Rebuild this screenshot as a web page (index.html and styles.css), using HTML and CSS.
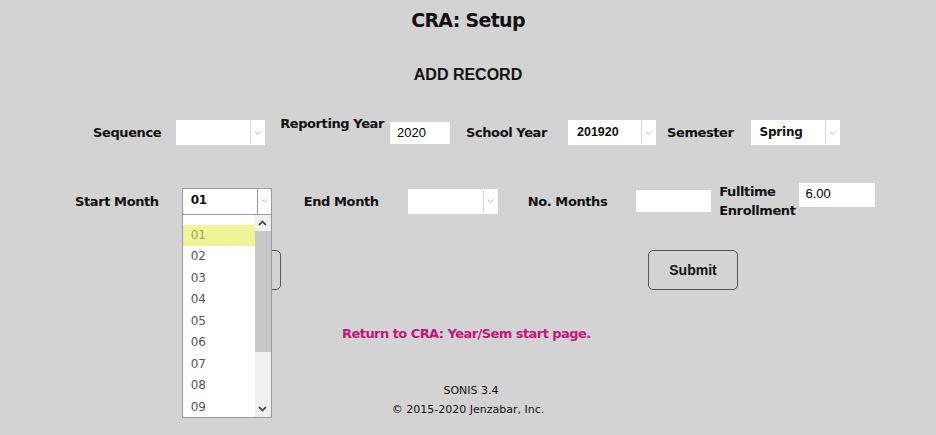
FILE: index.html
```html
<!DOCTYPE html>
<html>
<head>
<meta charset="utf-8">
<link rel="stylesheet" href="styles.css">
</head>
<body>
<div class="page">
  <h1 class="title">CRA: Setup</h1>
  <h2 class="subtitle">ADD RECORD</h2>

  <div class="row row1">
    <span class="lbl lbl-seq">Sequence</span>
    <div class="sel sel-seq"><span class="val"></span><span class="arr"><svg width="7" height="4" viewBox="0 0 7 4"><path d="M0.5 0.5 L3.5 3 L6.5 0.5" fill="none" stroke="#b4b4b4" stroke-width="1"/></svg></span></div>
    <span class="lbl lbl-top lbl-ry">Reporting Year</span>
    <div class="inp inp-ry">2020</div>
    <span class="lbl lbl-sy">School Year</span>
    <div class="sel sel-sy"><span class="val num">201920</span><span class="arr"><svg width="7" height="4" viewBox="0 0 7 4"><path d="M0.5 0.5 L3.5 3 L6.5 0.5" fill="none" stroke="#b4b4b4" stroke-width="1"/></svg></span></div>
    <span class="lbl lbl-sem">Semester</span>
    <div class="sel sel-sem"><span class="val bold">Spring</span><span class="arr"><svg width="7" height="4" viewBox="0 0 7 4"><path d="M0.5 0.5 L3.5 3 L6.5 0.5" fill="none" stroke="#b4b4b4" stroke-width="1"/></svg></span></div>
  </div>

  <div class="row row2">
    <span class="lbl lbl-sm">Start Month</span>
    <div class="sel sel-sm focus"><span class="val bold">01</span><span class="arr"><svg width="7" height="4" viewBox="0 0 7 4"><path d="M0.5 0.5 L3.5 3 L6.5 0.5" fill="none" stroke="#b4b4b4" stroke-width="1"/></svg></span>
      <div class="list">
        <div class="items">
          <div class="item hl">01</div>
          <div class="item">02</div>
          <div class="item">03</div>
          <div class="item">04</div>
          <div class="item">05</div>
          <div class="item">06</div>
          <div class="item">07</div>
          <div class="item">08</div>
          <div class="item">09</div>
        </div>
        <div class="scroll">
          <div class="sbtn"><svg width="9" height="6" viewBox="0 0 9 6"><path d="M1 5 L4.5 1.5 L8 5" fill="none" stroke="#505050" stroke-width="1.8"/></svg></div>
          <div class="track"><div class="thumb"></div></div>
          <div class="sbtn"><svg width="9" height="6" viewBox="0 0 9 6"><path d="M1 1 L4.5 4.5 L8 1" fill="none" stroke="#505050" stroke-width="1.8"/></svg></div>
        </div>
      </div>
    </div>
    <span class="lbl lbl-em">End Month</span>
    <div class="sel sel-em"><span class="val"></span><span class="arr"><svg width="7" height="4" viewBox="0 0 7 4"><path d="M0.5 0.5 L3.5 3 L6.5 0.5" fill="none" stroke="#b4b4b4" stroke-width="1"/></svg></span></div>
    <span class="lbl lbl-nm">No. Months</span>
    <div class="inp inp-nm"></div>
    <span class="lbl lbl-fe">Fulltime<br>Enrollment</span>
    <div class="inp inp-fe">6.00</div>
  </div>

  <div class="buttons">
    <div class="btn btn-back"></div>
    <div class="btn btn-submit">Submit</div>
  </div>

  <div class="link-row"><a class="link">Return to CRA: Year/Sem start page.</a></div>

  <div class="footer">
    <div class="f1">SONIS 3.4</div>
    <div class="f2">© 2015-2020 Jenzabar, Inc.</div>
  </div>
</div>
</body>
</html>
```

FILE: styles.css
```css
* { box-sizing: border-box; }
html, body { margin: 0; padding: 0; }
body {
  background: #d3d3d3;
  width: 936px;
  height: 435px;
  overflow: hidden;
  font-family: "DejaVu Sans", sans-serif;
  color: #111;
}
.page { width: 936px; position: relative; }
.title {
  margin: 0;
  padding-top: 9px;
  height: 40px;
  text-align: center;
  font-size: 19px;
  font-weight: bold;
  letter-spacing: -0.7px;
}
.subtitle {
  margin: 0;
  padding-top: 26px;
  height: 71px;
  text-align: center;
  font-family: "Liberation Sans", Arial, sans-serif;
  font-size: 16px;
  font-weight: bold;
}
.row { display: flex; align-items: center; }
.row1 { height: 43px; }
.row2 { height: 48px; margin-top: 23px; }
.lbl { font-size: 13px; font-weight: bold; white-space: nowrap; letter-spacing: -0.4px; }
.lbl-top { align-self: flex-start; padding-top: 5px; }
.lbl-seq { margin-left: 93px; }
.sel-seq { margin-left: 15px; }
.lbl-ry { margin-left: 15px; }
.inp-ry { margin-left: 6px; }
.lbl-sy { margin-left: 16px; }
.sel-sy { margin-left: 21px; }
.lbl-sem { margin-left: 11px; }
.sel-sem { margin-left: 17px; }

.lbl-sm { margin-left: 75px; }
.sel-sm { margin-left: 23px; }
.lbl-em { margin-left: 32px; }
.sel-em { margin-left: 29px; }
.lbl-nm { margin-left: 30px; }
.inp-nm { margin-left: 29px; }
.lbl-fe { margin-left: 8px; line-height: 19px; white-space: normal; }
.inp-fe { margin-left: 3px; align-self: flex-start; margin-top: 6px; }

.sel {
  position: relative;
  display: flex;
  width: 89px;
  height: 25px;
  background: #fff;
  border: 1px solid #fff;
}
.sel-sy { width: 88px; }
.sel-em { width: 90px; }
.sel.focus { border-color: #9a9a9a; height: 27px; width: 90px; }
.sel .val {
  flex: 1;
  font-size: 12px;
  line-height: 23px;
  padding-left: 8px;
}
.sel .val.bold { font-weight: bold; letter-spacing: -0.2px; }
.sel .val.num { font-family: "Liberation Sans", Arial, sans-serif; font-weight: bold; font-size: 12.5px; }
.sel .arr {
  width: 14px;
  border-left: 1px solid #d8d8d8;
  display: flex;
  align-items: center;
  justify-content: center;
}
.sel.focus .arr { border-left-color: #9a9a9a; }
.inp {
  background: #fff;
  height: 22px;
  font-family: "Liberation Sans", Arial, sans-serif;
  font-size: 13px;
  line-height: 22px;
  padding-left: 7px;
  color: #000;
}
.inp-ry { width: 60px; }
.inp-nm { width: 75px; }
.inp-fe { width: 76px; height: 24px; line-height: 22px; }

.list {
  position: absolute;
  left: -1px;
  top: 25px;
  width: 90px;
  height: 204px;
  background: #fff;
  border: 1px solid #9a9a9a;
  display: flex;
  z-index: 5;
}
.items { flex: 1; padding-top: 10px; }
.item {
  height: 21.5px;
  line-height: 21.5px;
  padding-left: 8px;
  font-size: 12px;
  color: #555;
}
.item.hl { background: #f0f59a; color: #a2a250; }
.scroll { width: 16px; background: #f0f0f0; display: flex; flex-direction: column; }
.sbtn { height: 16px; display: flex; align-items: center; justify-content: center; }
.track { flex: 1; }
.thumb { height: 121px; background: #c8c8c8; }

.buttons { display: flex; margin-top: 25px; height: 40px; }
.btn {
  width: 90px;
  height: 40px;
  border: 1px solid #555;
  border-radius: 5px;
  font-family: "Liberation Sans", Arial, sans-serif;
  font-size: 14px;
  font-weight: bold;
  display: flex;
  align-items: center;
  justify-content: center;
}
.btn-back { margin-left: 191px; }
.btn-submit { margin-left: 367px; }

.link-row { margin-top: 33px; padding-left: 342px; height: 20px; }
.link { color: #c4157f; font-size: 13px; font-weight: bold; letter-spacing: -0.55px; }

.footer { margin-top: 38px; text-align: center; font-size: 11px; line-height: 19px; }
.f1 { padding-left: 6px; }
```
